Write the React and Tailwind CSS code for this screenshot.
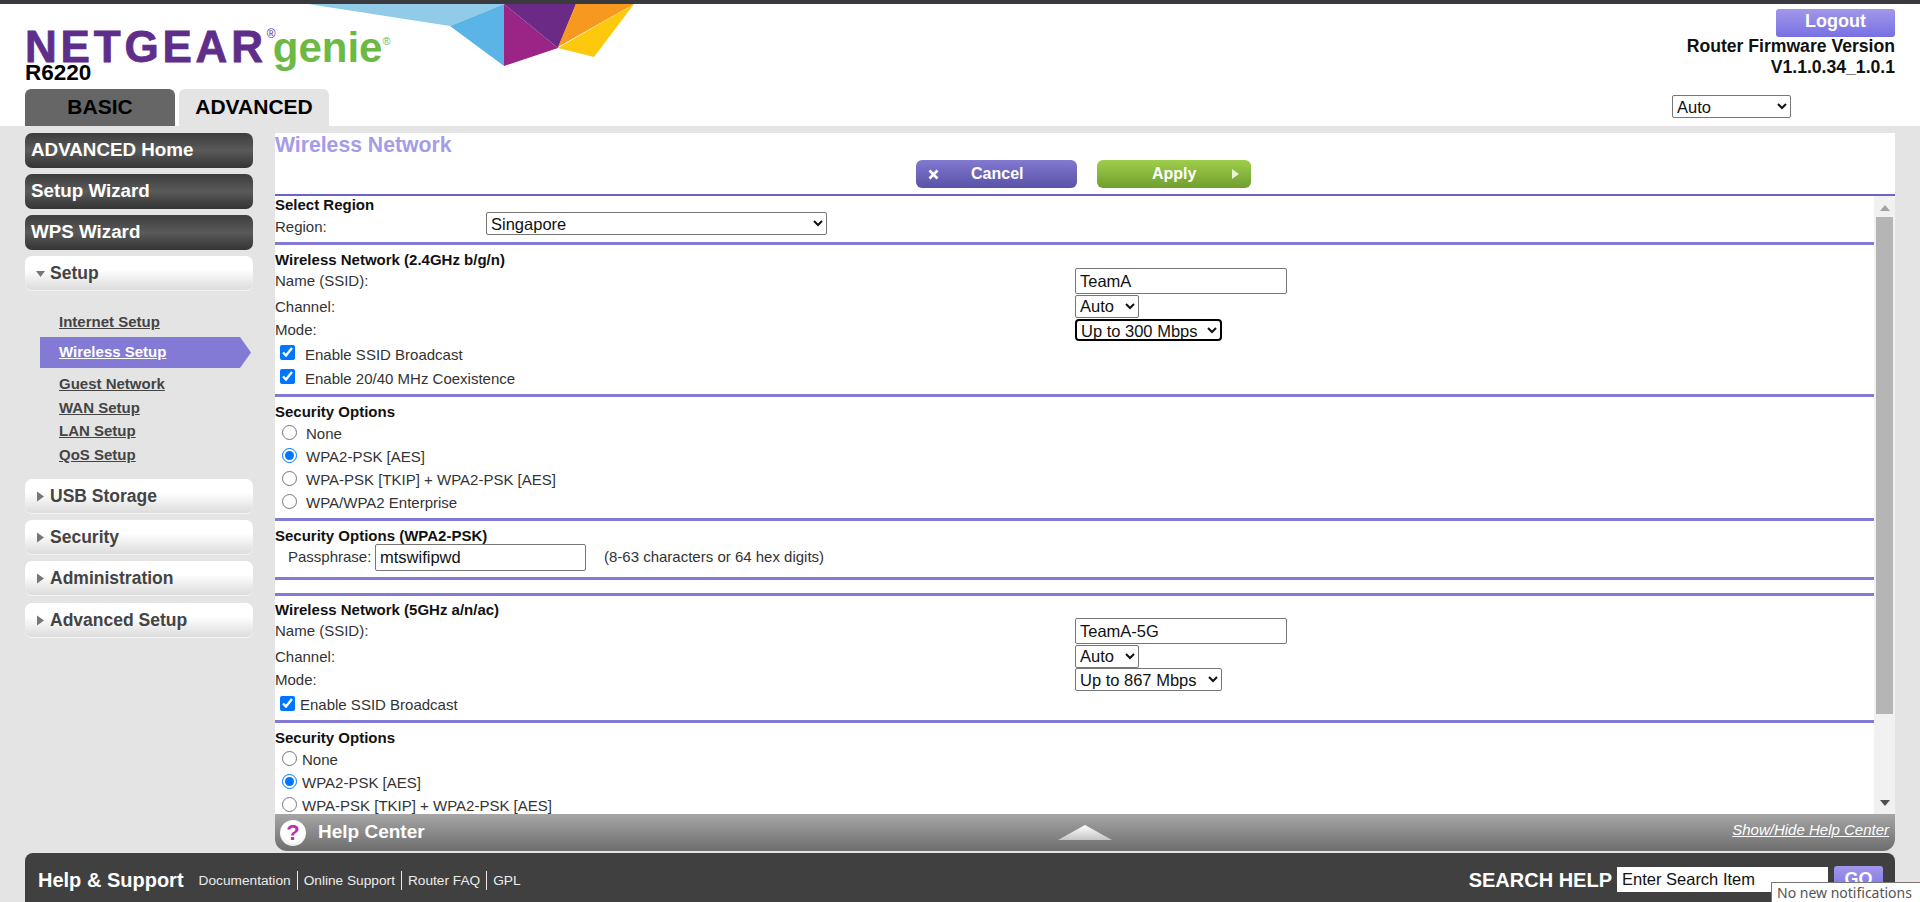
import React from "react";

const Line = ({ thin }) => (
  <div className={thin ? "h-[2px] bg-[#6c62c8] shrink-0" : "h-[3px] bg-[#827ad6] shrink-0"} />
);

const Heading = ({ h, pt, children }) => (
  <div className={`font-bold text-[15px] leading-[16px] text-[#111] shrink-0 ${h} ${pt}`}>{children}</div>
);

const Sel = ({ value, options, cls }) => (
  <select defaultValue={value} className={`text-[16.5px] leading-[18px] text-[#111] bg-white ${cls}`}>
    {options.map((o) => (
      <option key={o}>{o}</option>
    ))}
  </select>
);

const GridRow = ({ label, h, lcls = "", children }) => (
  <div className={`flex items-center shrink-0 text-[15px] text-[#333] ${h}`}>
    <div className={`w-[800px] ${lcls}`}>{label}</div>
    {children}
  </div>
);

const SsidBlock = ({ ssid, mode, focus }) => (
  <>
    <GridRow label="Name (SSID):" h="h-[26px]" lcls="pt-[1px]">
      <input readOnly value={ssid} className="w-[212px] h-[26px] self-start border border-[#767676] rounded-[2px] px-[4px] text-[16.5px] text-[#111] bg-white" />
    </GridRow>
    <GridRow label="Channel:" h="h-[24px]" lcls="pt-[2px]">
      <Sel value="Auto" options={["Auto"]} cls="w-[64px] h-[23px] border border-[#767676] rounded-[2px]" />
    </GridRow>
    <GridRow label="Mode:" h="h-[23px]" lcls="pt-[2px]">
      <Sel
        value={mode}
        options={[mode]}
        cls={focus ? "w-[147px] h-[22px] border-2 border-black rounded-[4px]" : "w-[147px] h-[23px] border border-[#767676] rounded-[2px]"}
      />
    </GridRow>
  </>
);

const Check = ({ label, h, gap, mb }) => (
  <div className={`flex items-center shrink-0 pl-[5px] text-[15px] text-[#333] ${h} ${gap}`}>
    <input type="checkbox" readOnly checked className={`w-[15px] h-[15px] m-0 ${mb}`} />
    <span>{label}</span>
  </div>
);

const Radio = ({ label, checked, gap }) => (
  <div className={`flex items-center shrink-0 h-[23px] pl-[7px] text-[15px] text-[#333] ${gap}`}>
    <input type="radio" readOnly checked={!!checked} className="w-[15px] h-[15px] m-0 mb-[5px]" />
    <span>{label}</span>
  </div>
);

const DarkBtn = ({ children }) => (
  <div className="h-[35px] rounded-[7px] bg-gradient-to-b from-[#3d3d3d] via-[#5a5a5a] to-[#343434] flex items-center pl-[6px] text-white font-bold text-[18.8px]">
    {children}
  </div>
);

const LightBtn = ({ children, open }) => (
  <div className="h-[35px] rounded-[7px] bg-gradient-to-b from-white from-40% to-[#dcdcdc] border-b border-[#f4f4f4] flex items-center pl-[11px] gap-[5px] text-[#444] font-bold text-[17.5px]">
    <svg width="9" height="11" viewBox="0 0 9 11" className="shrink-0">
      {open ? <polygon points="0,3 9,3 4.5,9" fill="#777" /> : <polygon points="1,0.5 8,5.5 1,10.5" fill="#777" />}
    </svg>
    <span>{children}</span>
  </div>
);

const SubLink = ({ children, h = "h-[24px]" }) => (
  <div className={`${h} pl-[34px] flex items-center text-[15px] font-bold text-[#444] underline`}>{children}</div>
);

export default function App() {
  return (
    <div className="relative w-full h-[902px] overflow-hidden bg-[#e4e4e4] flex flex-col [font-family:'Liberation_Sans',Arial,sans-serif]">
      <div className="h-[4px] bg-[#3a3a3e] shrink-0" />

      {/* Header */}
      <header className="relative h-[122px] shrink-0 bg-white flex justify-between">
        <svg className="absolute left-[300px] top-0" width="340" height="70" viewBox="300 4 340 70">
          <polygon points="308,4 504,4 450,26" fill="#92cbe8" />
          <polygon points="504,4 450,26 504,66" fill="#5ab4e5" />
          <polygon points="504,4 504,66 558,48" fill="#9b2487" />
          <polygon points="504,4 576,4 558,48" fill="#6a2a85" />
          <polygon points="576,4 634,4 558,47" fill="#f7991f" />
          <polygon points="558,48 594,57 634,4" fill="#fdc90c" />
        </svg>

        <div className="relative pl-[25px] pt-[21px] flex flex-col">
          <div className="h-[40px] flex items-baseline leading-[44px]">
            <span className="text-[44px] font-bold text-[#5f2d8a] tracking-[3.8px] [-webkit-text-stroke:0.8px_#5f2d8a]">NETGEAR</span>
            <span className="w-[6px] text-[12px] leading-none relative -top-[24px] text-[#5f2d8a] whitespace-nowrap">®</span>
            <span className="text-[42px] font-bold text-[#6cb945]">genie</span>
            <span className="text-[11px] leading-none relative -top-[17px] text-[#6cb945]">®</span>
          </div>
          <div className="h-[16px] leading-[16px] text-[22.5px] font-bold text-black mb-[8px]">R6220</div>
          <div className="flex gap-[4px]">
            <div className="w-[150px] h-[37px] rounded-t-[6px] bg-[#666] flex items-center justify-center pb-[2px] text-[21px] font-bold text-black">BASIC</div>
            <div className="w-[150px] h-[37px] rounded-t-[6px] bg-[#e4e4e4] flex items-center justify-center pb-[2px] text-[21px] font-bold text-black">ADVANCED</div>
          </div>
        </div>

        <div className="pr-[25px] pt-[5px] flex flex-col items-end">
          <div className="w-[119px] h-[28px] rounded-[3px] bg-gradient-to-b from-[#a297ea] to-[#7870e2] flex items-center justify-center pb-[3px] text-white font-bold text-[18px]">Logout</div>
          <div className="-mt-[1px] text-right font-bold text-[17.6px] leading-[21px] text-[#111]">
            <div>Router Firmware Version</div>
            <div>V1.1.0.34_1.0.1</div>
          </div>
          <select defaultValue="Auto" className="mt-[17px] mr-[104px] w-[119px] h-[23px] border border-[#767676] rounded-[2px] text-[16.5px] text-[#111] bg-white">
            <option>Auto</option>
          </select>
        </div>
      </header>

      {/* Main */}
      <div className="h-[725px] shrink-0 flex pt-[7px]">
        <aside className="ml-[25px] w-[228px] shrink-0 flex flex-col">
          <DarkBtn>ADVANCED Home</DarkBtn>
          <div className="mt-[6px]"><DarkBtn>Setup Wizard</DarkBtn></div>
          <div className="mt-[6px]"><DarkBtn>WPS Wizard</DarkBtn></div>
          <div className="mt-[6px]"><LightBtn open>Setup</LightBtn></div>
          <div className="pt-[19px]"><SubLink>Internet Setup</SubLink></div>
          <div className="mt-[3px] ml-[15px] w-[211px] h-[31px] bg-[#827ad4] [clip-path:polygon(0_0,calc(100%-11px)_0,100%_50%,calc(100%-11px)_100%,0_100%)] flex items-center pl-[19px] text-[15px] font-bold text-white underline">Wireless Setup</div>
          <div className="mt-[4px]"><SubLink>Guest Network</SubLink></div>
          <SubLink>WAN Setup</SubLink>
          <SubLink h="h-[23px]">LAN Setup</SubLink>
          <SubLink>QoS Setup</SubLink>
          <div className="mt-[12px]"><LightBtn>USB Storage</LightBtn></div>
          <div className="mt-[6px]"><LightBtn>Security</LightBtn></div>
          <div className="mt-[6px]"><LightBtn>Administration</LightBtn></div>
          <div className="mt-[7px]"><LightBtn>Advanced Setup</LightBtn></div>
        </aside>

        <main className="ml-[22px] mr-[25px] flex-1 min-w-0 flex flex-col">
          <div className="h-[61px] bg-white shrink-0 flex flex-col">
            <div className="h-[27px] text-[21.2px] leading-[23px] font-bold text-[#a29cea]">Wireless Network</div>
            <div className="flex gap-[20px] ml-[641px]">
              <div className="w-[161px] h-[28px] rounded-[6px] bg-gradient-to-b from-[#827ad0] to-[#5a52a6] flex items-center pl-[12px] text-white font-bold text-[16px]">
                <svg width="11" height="11" viewBox="0 0 11 11" className="mr-[32px]">
                  <path d="M1.5 1.5 9.5 9.5M9.5 1.5 1.5 9.5" stroke="#fff" strokeWidth="2.6" />
                </svg>
                Cancel
              </div>
              <div className="w-[154px] h-[28px] rounded-[6px] bg-gradient-to-b from-[#9fce4c] to-[#6f9f2e] flex items-center pl-[55px] text-white font-bold text-[16px]">
                Apply
                <svg width="7" height="10" viewBox="0 0 7 10" className="ml-[36px]">
                  <polygon points="0,0 7,5 0,10" fill="#e9f3d6" />
                </svg>
              </div>
            </div>
          </div>
          <Line thin />

          <div className="h-[618px] shrink-0 flex bg-white">
            <div className="flex-1 min-w-0 overflow-hidden flex flex-col">
              <Heading h="h-[17px]" pt="pt-[1px]">Select Region</Heading>
              <div className="h-[29px] shrink-0 flex items-start text-[15px] text-[#333]">
                <div className="w-[211px] pt-[5px] leading-[18px]">Region:</div>
                <Sel value="Singapore" options={["Singapore"]} cls="w-[341px] h-[23px] -mt-[1px] border border-[#767676] rounded-[2px]" />
              </div>
              <Line />

              <Heading h="h-[23px]" pt="pt-[7px]">Wireless Network (2.4GHz b/g/n)</Heading>
              <SsidBlock ssid="TeamA" mode="Up to 300 Mbps" focus />
              <Check label="Enable SSID Broadcast" h="h-[28px]" gap="gap-[10px]" mb="mb-[6px]" />
              <Check label="Enable 20/40 MHz Coexistence" h="h-[21px] mb-[4px]" gap="gap-[10px]" mb="mb-[6px]" />
              <Line />

              <Heading h="h-[26px]" pt="pt-[7px]">Security Options</Heading>
              <Radio label="None" gap="gap-[9px]" />
              <Radio label="WPA2-PSK [AES]" checked gap="gap-[9px]" />
              <Radio label="WPA-PSK [TKIP] + WPA2-PSK [AES]" gap="gap-[9px]" />
              <Radio label="WPA/WPA2 Enterprise" gap="gap-[9px]" />
              <div className="h-[3px] shrink-0" />
              <Line />

              <Heading h="h-[23px]" pt="pt-[7px]">Security Options (WPA2-PSK)</Heading>
              <div className="h-[27px] shrink-0 flex items-center pl-[13px] text-[15px] text-[#333]">
                <span className="w-[87px]">Passphrase:</span>
                <input readOnly value="mtswifipwd" className="w-[211px] h-[27px] border border-[#767676] rounded-[2px] px-[4px] text-[16.5px] text-[#111] bg-white" />
                <span className="ml-[18px]">(8-63 characters or 64 hex digits)</span>
              </div>
              <div className="h-[6px] shrink-0" />
              <Line />
              <div className="h-[13px] shrink-0" />
              <Line />

              <Heading h="h-[22px]" pt="pt-[6px]">Wireless Network (5GHz a/n/ac)</Heading>
              <SsidBlock ssid="TeamA-5G" mode="Up to 867 Mbps" />
              <Check label="Enable SSID Broadcast" h="h-[29px]" gap="gap-[5px]" mb="mb-[5px]" />
              <Line />

              <Heading h="h-[26px]" pt="pt-[7px]">Security Options</Heading>
              <Radio label="None" gap="gap-[5px]" />
              <Radio label="WPA2-PSK [AES]" checked gap="gap-[5px]" />
              <Radio label="WPA-PSK [TKIP] + WPA2-PSK [AES]" gap="gap-[5px]" />
            </div>

            <div className="w-[21px] shrink-0 bg-[#f1f1f1] flex flex-col items-center">
              <svg width="10" height="6" viewBox="0 0 10 6" className="mt-[9px] shrink-0">
                <polygon points="5,0 10,6 0,6" fill="#a3a3a3" />
              </svg>
              <div className="mt-[6px] w-[17px] h-[497px] bg-[#b5b5b5] shrink-0" />
              <svg width="10" height="6" viewBox="0 0 10 6" className="mt-[86px] shrink-0">
                <polygon points="0,0 10,0 5,6" fill="#505050" />
              </svg>
            </div>
          </div>

          <div className="h-[37px] shrink-0 rounded-b-[12px] bg-gradient-to-b from-[#a6a6a6] to-[#6e6e6e] grid grid-cols-3 items-center">
            <div className="flex items-center pl-[5px]">
              <div className="w-[26px] h-[26px] rounded-full bg-[radial-gradient(circle_at_50%_35%,#ffffff_55%,#d6d6d6)] flex items-center justify-center text-[#c22bb0] font-bold text-[22px] leading-none">?</div>
              <span className="ml-[12px] text-white font-bold text-[19px]">Help Center</span>
            </div>
            <div className="flex justify-center">
              <svg width="54" height="15" viewBox="0 0 54 15">
                <defs>
                  <linearGradient id="tri" x1="0" y1="0" x2="0" y2="1">
                    <stop offset="0" stopColor="#ffffff" />
                    <stop offset="1" stopColor="#c4c4c4" />
                  </linearGradient>
                </defs>
                <polygon points="27,0 54,15 0,15" fill="url(#tri)" />
              </svg>
            </div>
            <div className="text-right pr-[6px] pb-[5px] text-white italic underline text-[15px]">Show/Hide Help Center</div>
          </div>
        </main>
      </div>

      {/* Footer */}
      <div className="mx-[25px] mt-[2px] flex-1 rounded-t-[8px] bg-[#404040] flex items-center justify-between pt-[4px] pl-[13px] pr-[12px]">
        <div className="flex items-center">
          <span className="text-white font-bold text-[20px]">Help &amp; Support</span>
          <div className="flex items-center ml-[15px] mt-[2px] text-[13.7px] text-[#ececec] leading-[19px]">
            <span className="pr-[6px] border-r border-[#e6e6e6]">Documentation</span>
            <span className="pl-[6px] pr-[6px] border-r border-[#e6e6e6]">Online Support</span>
            <span className="pl-[6px] pr-[6px] border-r border-[#e6e6e6]">Router FAQ</span>
            <span className="pl-[6px]">GPL</span>
          </div>
        </div>
        <div className="flex items-center">
          <span className="text-white font-bold text-[20px]">SEARCH HELP</span>
          <input readOnly value="Enter Search Item" className="ml-[5px] w-[211px] h-[25px] bg-white px-[5px] text-[16.5px] text-[#111]" />
          <div className="ml-[6px] w-[49px] h-[28px] rounded-[3px] bg-gradient-to-b from-[#a297ea] to-[#7870e2] flex items-center justify-center text-white font-bold text-[18px]">GO</div>
        </div>
      </div>

      <div className="absolute right-0 bottom-0 w-[149px] h-[20px] bg-white border border-[#767676] border-b-0 border-r-0 flex items-center pl-[5px] text-[14px] text-[#555] [font-family:'Noto_Sans',sans-serif] whitespace-nowrap">
        No new notifications
      </div>
    </div>
  );
}
